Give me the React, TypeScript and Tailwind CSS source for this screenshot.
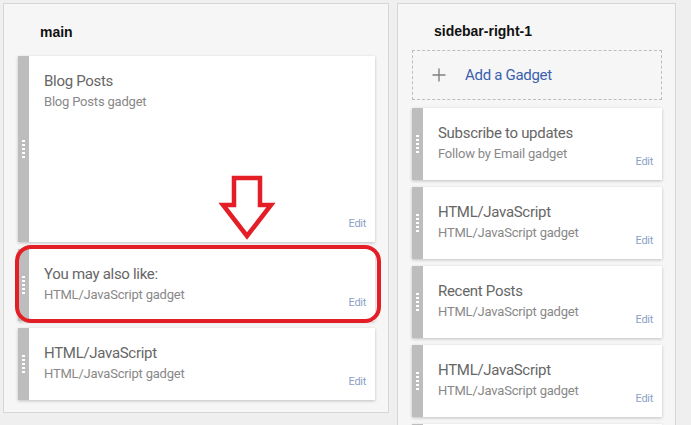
import React from 'react';

interface Gadget {
  title: string;
  sub: string;
  h?: string;
}

const mainGadgets: Gadget[] = [
  { title: 'Blog Posts', sub: 'Blog Posts gadget', h: 'h-[186px]' },
  { title: 'You may also like:', sub: 'HTML/JavaScript gadget' },
  { title: 'HTML/JavaScript', sub: 'HTML/JavaScript gadget' },
];

const sideGadgets: Gadget[] = [
  { title: 'Subscribe to updates', sub: 'Follow by Email gadget' },
  { title: 'HTML/JavaScript', sub: 'HTML/JavaScript gadget' },
  { title: 'Recent Posts', sub: 'HTML/JavaScript gadget' },
  { title: 'HTML/JavaScript', sub: 'HTML/JavaScript gadget' },
];

function Handle() {
  return (
    <div className="w-[11px] shrink-0 bg-[#bdbdbd] flex flex-col items-center justify-center gap-[2px] pr-[1px]">
      {[0, 1, 2, 3, 4].map((i) => (
        <span key={i} className="block w-[3px] h-[2px] bg-white" />
      ))}
    </div>
  );
}

function GadgetCard({ g }: { g: Gadget }) {
  return (
    <div className={`flex ${g.h ?? 'h-[72px]'} shrink-0 shadow-[0_1px_3px_rgba(0,0,0,0.22)]`}>
      <Handle />
      <div className="flex-1 bg-white flex flex-col pl-[15px] pr-[9px] pt-[15px] pb-[11px] font-['Roboto',sans-serif]">
        <div className="text-[15px] leading-[20px] tracking-[-0.3px] text-[#666]">{g.title}</div>
        <div className="mt-[2px] flex-1 min-h-0 flex justify-between items-end">
          <div className="self-start text-[13px] leading-[18px] tracking-[-0.2px] text-[#888]">{g.sub}</div>
          <a className="text-[11px] leading-[14px] tracking-[-0.3px] text-[#8c9fc6]">Edit</a>
        </div>
      </div>
    </div>
  );
}

export default function App() {
  return (
    <div className="relative w-[691px] h-[425px] overflow-hidden bg-[#efefef] flex items-start gap-[8px] pt-[3px] pl-[3px]">
      {/* main column */}
      <section className="w-[386px] border border-[#d6d6d6] bg-[#f6f6f6] pl-[14px] pr-[13px] pb-[12px]">
        <h2 className="pl-[22px] pt-[19px] pb-[15px] text-[14px] leading-[18px] font-bold text-[#111] font-['Liberation_Sans',Arial,sans-serif]">
          main
        </h2>
        <div className="flex flex-col gap-[7px]">
          {mainGadgets.map((g, i) => (
            <GadgetCard key={i} g={g} />
          ))}
        </div>
      </section>

      {/* sidebar column */}
      <section className="w-[279px] h-[460px] border border-[#d6d6d6] bg-[#f6f6f6] pl-[14px] pr-[13px]">
        <h2 className="pl-[22px] pt-[18px] pb-[10px] text-[14px] leading-[18px] font-bold text-[#111] font-['Liberation_Sans',Arial,sans-serif]">
          sidebar-right-1
        </h2>
        <div className="h-[50px] border border-dashed border-[#bdbdbd] flex items-center pl-[19px] gap-[19px] font-['Roboto',sans-serif]">
          <svg width="14" height="14" viewBox="0 0 14 14" className="shrink-0">
            <path d="M7 0.5v13M0.5 7h13" stroke="#808080" strokeWidth="1.4" fill="none" />
          </svg>
          <span className="text-[15px] tracking-[-0.3px] text-[#3b5fae]">Add a Gadget</span>
        </div>
        <div className="mt-[8px] flex flex-col gap-[7px]">
          {sideGadgets.map((g, i) => (
            <GadgetCard key={i} g={g} />
          ))}
          {/* next gadget, only its top edge shows */}
          <div className="flex h-[72px] shrink-0 shadow-[0_1px_3px_rgba(0,0,0,0.22)]">
            <div className="w-[11px] bg-[#bdbdbd]" />
            <div className="flex-1 bg-white" />
          </div>
        </div>
      </section>

      {/* red annotation */}
      <svg className="absolute left-0 top-0 pointer-events-none" width="691" height="425" viewBox="0 0 691 425">
        <rect x="17" y="247" width="362" height="74" rx="14" ry="14" fill="none" stroke="#e41e26" strokeWidth="4" />
        <polygon
          points="234,178 260,178 260,205 271,205 247,236 223,205 234,205"
          fill="none"
          stroke="#e41e26"
          strokeWidth="4.5"
          strokeLinejoin="miter"
        />
      </svg>
    </div>
  );
}
